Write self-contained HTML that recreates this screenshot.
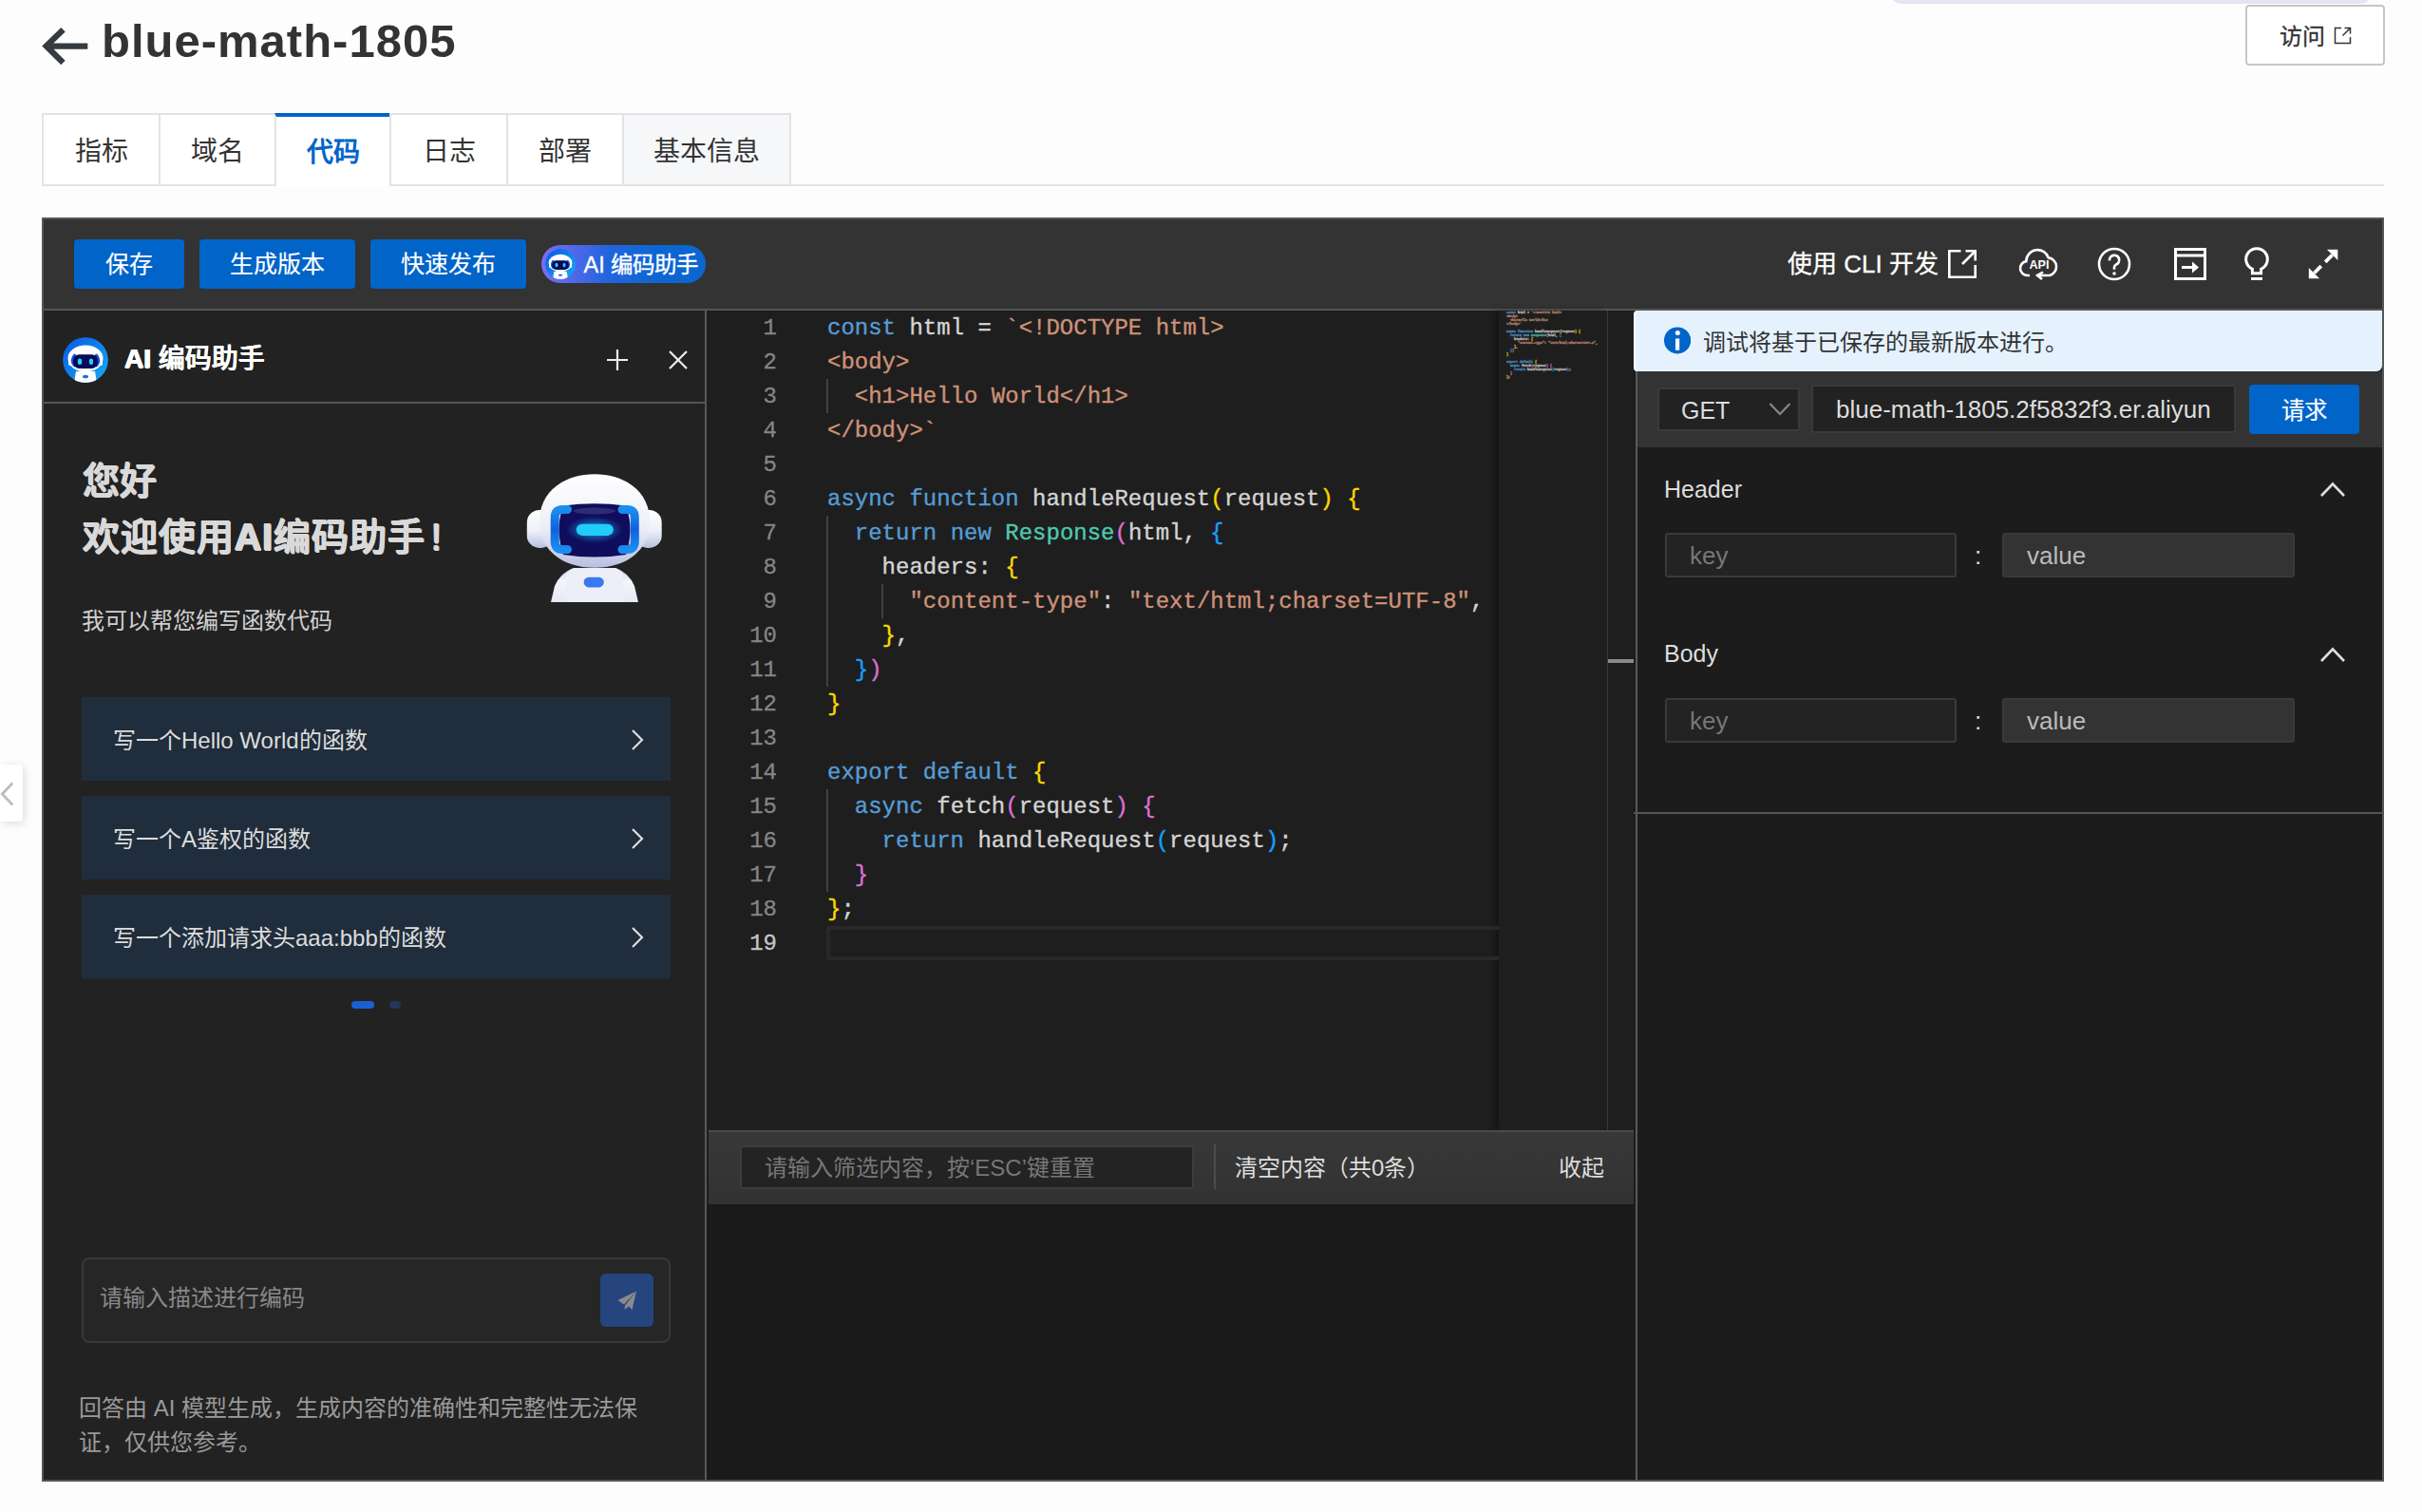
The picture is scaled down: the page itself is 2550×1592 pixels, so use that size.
<!DOCTYPE html>
<html lang="zh-CN"><head><meta charset="utf-8">
<style>
*{box-sizing:border-box;margin:0;padding:0}
html,body{width:2550px;height:1592px;overflow:hidden}
body{position:relative;background:#fdfdfd;font-family:"Liberation Sans",sans-serif;color:#333}
.a{position:absolute}
.t{white-space:nowrap}
/* header */
#lav{left:1990px;top:-10px;width:507px;height:14px;background:#e4e4f4;border-radius:0 0 12px 12px}
#title{left:107px;top:14.5px;font-size:49px;font-weight:bold;color:#333;line-height:56px;letter-spacing:1px}
#visit{left:2364px;top:5px;width:147px;height:64px;border:2px solid #c6c6c6;border-radius:4px;background:#fff}
#visit span{position:absolute;left:34px;top:16.5px;font-size:24px;line-height:30px;color:#333;-webkit-text-stroke:0.3px #333}
/* tabs */
.tab{top:119px;height:77px;border:2px solid #e3e3e3;border-right:none;background:#fff;font-size:28px;line-height:77px;text-align:center;color:#333}
.tab.act{border-top:4px solid #0064c8;color:#0064c8;font-weight:bold;border-bottom:none;line-height:75px}
#tabline{left:833px;top:194px;width:1677px;height:2px;background:#e3e3e3}
/* editor */
#ed{left:44px;top:229px;width:2466px;height:1331px;background:#1e1e1e;border:2px solid #555}
#tb{left:46px;top:231px;width:2462px;height:94px;background:#333}
#tbline{left:46px;top:325px;width:2462px;height:2px;background:#555}
.btn{top:252px;height:52px;background:#0064c8;border-radius:4px;color:#fff;font-size:25px;line-height:52px;text-align:center;-webkit-text-stroke:0.15px #fff}
#aipill{left:570px;top:258px;width:173px;height:40px;border-radius:20px;background:linear-gradient(90deg,#7e6cf3 0%,#5569ea 17%,#2265dd 40%,#0d66d3 70%,#0b66d0 100%)}
#aipill span{position:absolute;left:44.5px;top:3px;font-size:23.5px;line-height:36px;color:#fff;-webkit-text-stroke:0.35px #fff}
.tbi{color:#fff}
#cli{left:1882px;top:260px;font-size:26px;line-height:36px;color:#fff;-webkit-text-stroke:0.3px #fff}
/* left panel */
#lp{left:46px;top:327px;width:696px;height:1231px;background:#222}
#lpr{left:742px;top:327px;width:2px;height:1231px;background:#585858}
#lph{left:46px;top:423px;width:698px;height:2px;background:#555}
#lptitle{left:131px;top:359.5px;font-size:28px;font-weight:normal;line-height:36px;color:#fff;text-shadow:0.7px 0 0 #fff,-0.6px 0 0 #fff,0 0.5px 0 #fff,0 -0.4px 0 #fff}
#hello{left:87px;top:476.5px;font-size:39px;font-weight:normal;line-height:59px;color:#d9d9d9;text-shadow:1px 0 0 #d9d9d9,-1px 0 0 #d9d9d9,0 0.8px 0 #d9d9d9,0 -0.8px 0 #d9d9d9,0.7px 0.7px 0 #d9d9d9,-0.7px -0.7px 0 #d9d9d9}
#sub{left:86px;top:637.5px;font-size:24px;line-height:32px;color:#d0d0d0}
.card{left:86px;width:620px;height:88px;background:#202d3c}
.card span{position:absolute;left:33px;top:30.5px;font-size:24px;line-height:30px;color:#ddd}
.card svg{position:absolute;left:578px;top:34px}
#dot1{left:370px;top:1054px;width:24px;height:8px;border-radius:4px;background:#1c5fd0}
#dot2{left:410px;top:1054px;width:12px;height:8px;border-radius:4px;background:#26355a}
#inp{left:86px;top:1324px;width:620px;height:90px;border:2px solid #383838;border-radius:8px;background:#262626}
#inp span{position:absolute;left:17px;top:25.5px;font-size:24px;line-height:30px;color:#888}
#send{left:632px;top:1341px;width:56px;height:56px;border-radius:6px;background:#26457f}
#disc{left:83px;top:1465px;width:660px;font-size:24px;line-height:36px;color:#9a9a9a}
#coll{left:0;top:805px;width:24px;height:60px;background:#fff;border-radius:0 4px 4px 0;box-shadow:2px 2px 10px rgba(0,0,0,.13)}
/* code */
#code{left:744px;top:327px;width:976px;height:863px;background:#1e1e1e}
.ln{position:absolute;left:744px;margin-top:1px;width:74px;text-align:right;font-family:"Liberation Mono",monospace;font-size:24px;line-height:36px;color:#858585;-webkit-text-stroke:0.3px}
.cl{position:absolute;left:871px;margin-top:1px;font-family:"Liberation Mono",monospace;font-size:24px;line-height:36px;color:#d4d4d4;white-space:pre;-webkit-text-stroke:0.35px}
.k{color:#569cd6}.s{color:#ce9178}.c{color:#4ec9b0}.y{color:#ffd700}.p{color:#da70d6}.b{color:#179fff}
.mmc{-webkit-text-stroke:3px;font-weight:bold}
.ig{position:absolute;width:2px;background:#404040}
#curline{left:870px;top:975px;width:708px;height:36px;border:4px solid #282828;border-right:none}
#mm{left:1578px;top:327px;width:114px;height:863px;background:#1e1e1e;box-shadow:-4px 0 6px rgba(0,0,0,.35)}
#sbl{left:1692px;top:327px;width:1px;height:863px;background:#3a3a3a}
#sbmark{left:1693px;top:694px;width:27px;height:4px;background:#8a8a8a}
#con{left:746px;top:1190px;width:976px;height:78px;background:linear-gradient(#383838,#323232);border-top:2px solid #4a4a4a}
#conbot{left:744px;top:1268px;width:978px;height:290px;background:#1a1a1a}
#filt{left:779px;top:1206px;width:478px;height:46px;background:#232323;border:2px solid #3c3c3c;border-radius:2px}
#filt span{position:absolute;left:24px;top:6px;font-size:24px;line-height:32px;color:#777}
#condiv{left:1278px;top:1205px;width:2px;height:47px;background:#4c4c4c}
#clr{left:1300px;top:1214px;font-size:24px;line-height:32px;color:#ddd}
#shou{left:1641px;top:1214px;font-size:24px;line-height:32px;color:#ddd}
/* right panel */
#rp{left:1720px;top:327px;width:788px;height:1231px;background:#1c1c1c}
#rpl{left:1722px;top:391px;width:2px;height:1167px;background:#5a5a5a}
#notice{left:1720px;top:327px;width:788px;height:64px;background:#e5f2fe;border-radius:4px 0 6px 4px;border-left:2px solid #fff}
#notice span{position:absolute;left:71px;top:18px;font-size:24px;line-height:32px;color:#333}
#info{left:1753px;top:345px;width:27px;height:27px;border-radius:50%;background:#0064c8}
#reqrow{left:1724px;top:391px;width:784px;height:80px;background:#333}
#get{left:1745px;top:408px;width:150px;height:46px;background:#222;border:2px solid #3a3a3a;border-radius:2px}
#get span{position:absolute;left:23px;top:5.5px;font-size:25px;line-height:32px;color:#ddd}
#url{left:1907px;top:405px;width:447px;height:51px;background:#222;border:2px solid #3a3a3a;border-radius:2px}
#url span{position:absolute;left:24px;top:8px;font-size:26px;line-height:32px;color:#ddd}
#req{left:2368px;top:405px;width:116px;height:52px;background:#0064c8;border-radius:4px;color:#fff;font-size:24.5px;line-height:55px;text-align:center;-webkit-text-stroke:0.15px #fff}
.sech{font-size:25px;line-height:30px;color:#ddd}
.kin{width:307px;height:47px;background:#232323;border:2px solid #3a3a3a;border-radius:3px}
.kin span{position:absolute;left:24px;top:7px;font-size:26px;line-height:30px;color:#777}
.vin{width:308px;height:47px;background:#333;border:2px solid #3a3a3a;border-radius:3px}
.vin span{position:absolute;left:24px;top:7px;font-size:26px;line-height:30px;color:#bbb}
.colon{font-size:26px;line-height:30px;color:#ddd}
#rpbot{left:1720px;top:855px;width:788px;height:2px;background:#555}
</style></head><body>
<div id="lav" class="a"></div>
<svg class="a" style="left:42px;top:28px" width="52" height="42" viewBox="0 0 52 42"><path d="M24.5 3.2 L6.7 20.6 L24.5 38 M6.7 20.6 H50.3" fill="none" stroke="#363b41" stroke-width="6.3"/></svg>
<div id="title" class="a t">blue-math-1805</div>
<div id="visit" class="a"><span class="t">访问</span>
<svg class="a" style="left:91px;top:21px" width="20" height="20" viewBox="0 0 20 20"><path d="M8 1.5H1.5V17.5H17.5V11 M11.5 1.5H17.5V7.5 M17.5 1.5L9.5 9.5" fill="none" stroke="#333" stroke-width="1.5"/></svg></div>

<div class="a tab" style="left:44px;width:123px">指标</div>
<div class="a tab" style="left:167px;width:122px">域名</div>
<div class="a tab act" style="left:289px;width:121px">代码</div>
<div class="a tab" style="left:410px;width:123px">日志</div>
<div class="a tab" style="left:533px;width:122px">部署</div>
<div class="a tab" style="left:655px;width:178px;background:#f6f7f9;border-right:2px solid #e3e3e3">基本信息</div>
<div id="tabline" class="a"></div>

<div id="ed" class="a"></div>
<div id="tb" class="a"></div>
<div id="tbline" class="a"></div>
<div class="a btn t" style="left:78px;width:116px">保存</div>
<div class="a btn t" style="left:210px;width:164px">生成版本</div>
<div class="a btn t" style="left:390px;width:164px">快速发布</div>
<div id="aipill" class="a"><span class="t">AI 编码助手</span></div>
<div id="cli" class="a t">使用 CLI 开发</div>

<div id="lp" class="a"></div>
<div id="lpr" class="a"></div>
<div id="lph" class="a"></div>
<div id="lptitle" class="a t"><b>AI</b> 编码助手</div>
<div id="hello" class="a t">您好<br><span style="letter-spacing:1px">欢迎使用<b>AI</b>编码助手</span><span style="margin-left:6px">!</span></div>
<div id="sub" class="a t">我可以帮您编写函数代码</div>
<div class="a card" style="top:734px"><span class="t">写一个Hello World的函数</span><svg width="14" height="22" viewBox="0 0 14 22"><path d="M2 1L12 11L2 21" fill="none" stroke="#ddd" stroke-width="2.2"/></svg></div>
<div class="a card" style="top:838px"><span class="t">写一个A鉴权的函数</span><svg width="14" height="22" viewBox="0 0 14 22"><path d="M2 1L12 11L2 21" fill="none" stroke="#ddd" stroke-width="2.2"/></svg></div>
<div class="a card" style="top:942px"><span class="t">写一个添加请求头aaa:bbb的函数</span><svg width="14" height="22" viewBox="0 0 14 22"><path d="M2 1L12 11L2 21" fill="none" stroke="#ddd" stroke-width="2.2"/></svg></div>
<div id="dot1" class="a"></div><div id="dot2" class="a"></div>
<div id="inp" class="a"><span class="t">请输入描述进行编码</span></div>
<div id="send" class="a"></div>
<div id="disc" class="a">回答由 AI 模型生成，生成内容的准确性和完整性无法保<br>证，仅供您参考。</div>
<div id="coll" class="a"></div>

<div id="code" class="a"></div>
<div id="mm" class="a"></div>
<div class="a" style="left:1586px;top:327px;width:800px;height:700px;transform-origin:0 0;transform:scale(0.13889,0.11111);opacity:0.75"><div class="cl mmc" style="left:0;top:0px"><span class="k">const</span> html = <span class="s">`&lt;!DOCTYPE html&gt;</span></div><div class="cl mmc" style="left:0;top:36px"><span class="s">&lt;body&gt;</span></div><div class="cl mmc" style="left:0;top:72px"><span class="s">  &lt;h1&gt;Hello World&lt;/h1&gt;</span></div><div class="cl mmc" style="left:0;top:108px"><span class="s">&lt;/body&gt;`</span></div><div class="cl mmc" style="left:0;top:180px"><span class="k">async</span> <span class="k">function</span> handleRequest<span class="y">(</span>request<span class="y">)</span> <span class="y">{</span></div><div class="cl mmc" style="left:0;top:216px">  <span class="k">return</span> <span class="k">new</span> <span class="c">Response</span><span class="p">(</span>html, <span class="b">{</span></div><div class="cl mmc" style="left:0;top:252px">    headers: <span class="y">{</span></div><div class="cl mmc" style="left:0;top:288px">      <span class="s">"content-type"</span>: <span class="s">"text/html;charset=UTF-8"</span>,</div><div class="cl mmc" style="left:0;top:324px">    <span class="y">}</span>,</div><div class="cl mmc" style="left:0;top:360px">  <span class="b">}</span><span class="p">)</span></div><div class="cl mmc" style="left:0;top:396px"><span class="y">}</span></div><div class="cl mmc" style="left:0;top:468px"><span class="k">export</span> <span class="k">default</span> <span class="y">{</span></div><div class="cl mmc" style="left:0;top:504px">  <span class="k">async</span> fetch<span class="p">(</span>request<span class="p">)</span> <span class="p">{</span></div><div class="cl mmc" style="left:0;top:540px">    <span class="k">return</span> handleRequest<span class="b">(</span>request<span class="b">)</span>;</div><div class="cl mmc" style="left:0;top:576px">  <span class="p">}</span></div><div class="cl mmc" style="left:0;top:612px"><span class="y">}</span>;</div></div>
<div id="sbl" class="a"></div>
<div id="sbmark" class="a"></div>
<div id="con" class="a"></div>
<div id="conbot" class="a"></div>
<div id="filt" class="a"><span class="t">请输入筛选内容，按‘ESC’键重置</span></div>
<div id="condiv" class="a"></div>
<div id="clr" class="a t">清空内容（共0条）</div>
<div id="shou" class="a t">收起</div>

<div id="rp" class="a"></div>
<div id="rpl" class="a"></div>
<div id="notice" class="a"><span class="t">调试将基于已保存的最新版本进行。</span></div>
<div id="info" class="a"></div>
<div id="reqrow" class="a"></div>
<div id="get" class="a"><span class="t">GET</span></div>
<div id="url" class="a"><span class="t">blue-math-1805.2f5832f3.er.aliyun</span></div>
<div id="req" class="a t">请求</div>
<div class="a sech t" style="left:1752px;top:500px">Header</div>
<div class="a kin" style="left:1753px;top:561px"><span class="t">key</span></div>
<div class="a colon" style="left:2079px;top:570px">:</div>
<div class="a vin" style="left:2108px;top:561px"><span class="t">value</span></div>
<div class="a sech t" style="left:1752px;top:673px">Body</div>
<div class="a kin" style="left:1753px;top:735px"><span class="t">key</span></div>
<div class="a colon" style="left:2079px;top:744px">:</div>
<div class="a vin" style="left:2108px;top:735px"><span class="t">value</span></div>
<div id="rpbot" class="a"></div>
<div class="ln" style="top:327px">1</div>
<div class="ln" style="top:363px">2</div>
<div class="ln" style="top:399px">3</div>
<div class="ln" style="top:435px">4</div>
<div class="ln" style="top:471px">5</div>
<div class="ln" style="top:507px">6</div>
<div class="ln" style="top:543px">7</div>
<div class="ln" style="top:579px">8</div>
<div class="ln" style="top:615px">9</div>
<div class="ln" style="top:651px">10</div>
<div class="ln" style="top:687px">11</div>
<div class="ln" style="top:723px">12</div>
<div class="ln" style="top:759px">13</div>
<div class="ln" style="top:795px">14</div>
<div class="ln" style="top:831px">15</div>
<div class="ln" style="top:867px">16</div>
<div class="ln" style="top:903px">17</div>
<div class="ln" style="top:939px">18</div>
<div class="ln" style="top:975px;color:#c6c6c6">19</div>
<div id="curline" class="a"></div>
<div class="ig" style="left:870px;top:399px;height:36px"></div>
<div class="ig" style="left:870px;top:543px;height:180px"></div>
<div class="ig" style="left:928px;top:615px;height:36px"></div>
<div class="ig" style="left:870px;top:831px;height:108px"></div>
<div class="cl" style="top:327px"><span class="k">const</span> html = <span class="s">`&lt;!DOCTYPE html&gt;</span></div>
<div class="cl" style="top:363px"><span class="s">&lt;body&gt;</span></div>
<div class="cl" style="top:399px"><span class="s">  &lt;h1&gt;Hello World&lt;/h1&gt;</span></div>
<div class="cl" style="top:435px"><span class="s">&lt;/body&gt;`</span></div>
<div class="cl" style="top:507px"><span class="k">async</span> <span class="k">function</span> handleRequest<span class="y">(</span>request<span class="y">)</span> <span class="y">{</span></div>
<div class="cl" style="top:543px">  <span class="k">return</span> <span class="k">new</span> <span class="c">Response</span><span class="p">(</span>html, <span class="b">{</span></div>
<div class="cl" style="top:579px">    headers: <span class="y">{</span></div>
<div class="cl" style="top:615px">      <span class="s">"content-type"</span>: <span class="s">"text/html;charset=UTF-8"</span>,</div>
<div class="cl" style="top:651px">    <span class="y">}</span>,</div>
<div class="cl" style="top:687px">  <span class="b">}</span><span class="p">)</span></div>
<div class="cl" style="top:723px"><span class="y">}</span></div>
<div class="cl" style="top:795px"><span class="k">export</span> <span class="k">default</span> <span class="y">{</span></div>
<div class="cl" style="top:831px">  <span class="k">async</span> fetch<span class="p">(</span>request<span class="p">)</span> <span class="p">{</span></div>
<div class="cl" style="top:867px">    <span class="k">return</span> handleRequest<span class="b">(</span>request<span class="b">)</span>;</div>
<div class="cl" style="top:903px">  <span class="p">}</span></div>
<div class="cl" style="top:939px"><span class="y">}</span>;</div>


<!-- toolbar icons -->
<svg class="a" style="left:2049px;top:261px" width="34" height="34" viewBox="0 0 34 34"><path d="M15.5 3.3H3.3V30.7H30.7V18" fill="none" stroke="#fff" stroke-width="2.6"/><path d="M20.5 3.3H30.7V13.5" fill="none" stroke="#fff" stroke-width="2.6"/><path d="M30 4L17 17" fill="none" stroke="#fff" stroke-width="2.6"/></svg>
<svg class="a" style="left:2125px;top:257.5px" width="44" height="38" viewBox="0 0 44 38"><path d="M12 32H9.5A7.5 7.5 0 0 1 8.3 17.1A12 12 0 0 1 31.7 13.4A9.5 9.5 0 0 1 33 32H21" fill="none" stroke="#fff" stroke-width="2.6"/><path d="M26 28.5L20 32L25 36" fill="none" stroke="#fff" stroke-width="2.6"/><text x="22" y="25" text-anchor="middle" font-family="Liberation Sans" font-weight="bold" font-size="12.5" fill="#fff">API</text></svg>
<svg class="a" style="left:2207px;top:259px" width="38" height="38" viewBox="0 0 38 38"><circle cx="19" cy="19" r="16" fill="none" stroke="#fff" stroke-width="2.6"/><path d="M14 15.3A5.1 5.1 0 1 1 20.9 19.6C19.6 20.3 19 21 19 22.5V24.8" fill="none" stroke="#fff" stroke-width="2.7"/><circle cx="19" cy="29" r="1.8" fill="#fff"/></svg>
<svg class="a" style="left:2287px;top:259px" width="38" height="38" viewBox="0 0 38 38"><rect x="3.5" y="3.5" width="31" height="31" fill="none" stroke="#fff" stroke-width="3"/><path d="M3 10H35" stroke="#fff" stroke-width="3"/><path d="M10 22.5H22" stroke="#fff" stroke-width="3"/><path d="M21 16.5L28 22.5L21 28.5Z" fill="#fff"/></svg>
<svg class="a" style="left:2360px;top:258px" width="32" height="40" viewBox="0 0 32 40"><path d="M11.4 25.3V29.7H20.6V25.3A11.3 11.3 0 1 0 11.4 25.3Z" fill="none" stroke="#fff" stroke-width="3" stroke-linejoin="miter"/><path d="M10 35.5H22" stroke="#fff" stroke-width="3"/></svg>
<svg class="a" style="left:2428px;top:260px" width="36" height="36" viewBox="0 0 36 36"><path d="M33.3 2.8H22L33.3 14.1Z" fill="#fff"/><path d="M2.8 33.2H14.1L2.8 21.9Z" fill="#fff"/><path d="M27.5 8.5L20.2 15.8M15.8 20.2L8.5 27.5" stroke="#fff" stroke-width="3.8"/></svg>
<!-- pill avatar -->
<svg class="a" style="left:574px;top:262px" width="32" height="32" viewBox="0 0 48 48"><use href="#bot"/></svg>
<!-- panel header avatar -->
<svg class="a" style="left:66px;top:355px" width="48" height="48" viewBox="0 0 48 48"><use href="#bot"/></svg>
<svg class="a" style="left:638px;top:367px" width="24" height="24" viewBox="0 0 24 24"><path d="M12 1V23M1 12H23" stroke="#eee" stroke-width="2.2"/></svg>
<svg class="a" style="left:703px;top:368px" width="22" height="22" viewBox="0 0 22 22"><path d="M2 2L20 20M20 2L2 20" stroke="#eee" stroke-width="2.2"/></svg>
<!-- big robot -->
<svg class="a" style="left:550px;top:495px" width="152" height="142" viewBox="0 0 152 142"><use href="#bigbot"/></svg>
<!-- send plane -->
<svg class="a" style="left:632px;top:1341px" width="56" height="56" viewBox="0 0 56 56"><path d="M38 18.5L18.5 28L25 32.5Z" fill="#8a8a8a"/><path d="M38 18.5L26 33.5L25.5 38L30 34.5L33.5 38Z" fill="#8a8a8a"/></svg>
<!-- collapse chevron -->
<svg class="a" style="left:0px;top:822px" width="16" height="28" viewBox="0 0 16 28"><path d="M13.3 2.5L2.3 14L13.3 25.5" fill="none" stroke="#bdbdbd" stroke-width="2.8"/></svg>
<!-- info icon -->
<svg class="a" style="left:1752px;top:344px" width="28" height="29" viewBox="0 0 28 29"><circle cx="14" cy="14.4" r="14" fill="#0064c8"/><circle cx="14.3" cy="6.5" r="2.5" fill="#fff"/><rect x="12" y="12.5" width="4.2" height="12.2" fill="#fff"/></svg>
<!-- GET chevron -->
<svg class="a" style="left:1862px;top:423px" width="24" height="16" viewBox="0 0 24 16"><path d="M1.5 2L12 13L22.5 2" fill="none" stroke="#888" stroke-width="2.2"/></svg>
<!-- section chevrons -->
<svg class="a" style="left:2442px;top:506px" width="28" height="18" viewBox="0 0 28 18"><path d="M2 16L14 3.5L26 16" fill="none" stroke="#ddd" stroke-width="2.6"/></svg>
<svg class="a" style="left:2442px;top:680px" width="28" height="18" viewBox="0 0 28 18"><path d="M2 16L14 3.5L26 16" fill="none" stroke="#ddd" stroke-width="2.6"/></svg>
<svg width="0" height="0" style="position:absolute">
<defs>
<linearGradient id="bg1" x1="0" y1="0" x2="1" y2="1"><stop offset="0" stop-color="#0b55e6"/><stop offset="1" stop-color="#14b0f0"/></linearGradient>
<linearGradient id="hd" x1="0" y1="0" x2="0" y2="1"><stop offset="0" stop-color="#ffffff"/><stop offset="0.55" stop-color="#eef0f8"/><stop offset="1" stop-color="#b9c0e0"/></linearGradient>
<linearGradient id="bd" x1="0" y1="0" x2="0" y2="1"><stop offset="0" stop-color="#c9cfe8"/><stop offset="0.4" stop-color="#f4f5fb"/><stop offset="1" stop-color="#e6e8f4"/></linearGradient>
<linearGradient id="br" x1="0" y1="0" x2="0" y2="1"><stop offset="0" stop-color="#1a8ef0"/><stop offset="0.5" stop-color="#1360dc"/><stop offset="1" stop-color="#1a8ef0"/></linearGradient>
<radialGradient id="glow" cx="0.5" cy="0.5" r="0.5"><stop offset="0" stop-color="#1fb6ff" stop-opacity="0.8"/><stop offset="1" stop-color="#1fb6ff" stop-opacity="0"/></radialGradient>
<clipPath id="cc"><circle cx="24" cy="24" r="24"/></clipPath><g id="bot" clip-path="url(#cc)">
<circle cx="24" cy="24" r="24" fill="url(#bg1)"/>
<path d="M14 36L12 48H36L34 36Z" fill="#fff"/>
<rect x="21" y="40" width="6" height="3.2" rx="1.6" fill="#1a6fe0"/>
<ellipse cx="24" cy="22.5" rx="18.5" ry="14" fill="#fff"/>
<rect x="6" y="17" width="5" height="13" rx="2" fill="#fff"/>
<rect x="37" y="17" width="5" height="13" rx="2" fill="#fff"/>
<path d="M12.5 19.3Q8.3 24.6 12.5 29.8" fill="none" stroke="#1450d8" stroke-width="3.2" stroke-linecap="round"/>
<path d="M35.5 19.3Q39.7 24.6 35.5 29.8" fill="none" stroke="#1450d8" stroke-width="3.2" stroke-linecap="round"/>
<rect x="11" y="18.2" width="26" height="14.8" rx="6.5" fill="#0a0a5a"/>
<rect x="15.8" y="22.5" width="4.4" height="6.4" rx="2.2" fill="#22d3f5"/>
<rect x="28" y="22.5" width="4" height="6.4" rx="2" fill="#22d3f5"/>
</g>
<g id="bigbot">
<path d="M30 139L34 122Q40 108 54 103H98Q112 108 118 122L122 139Z" fill="url(#bd)"/>
<path d="M46 139V110Q50 103 56 103H96Q102 103 106 110V139Z" fill="#eceef8"/>
<rect x="64.6" y="112.8" width="21.2" height="10.6" rx="5.3" fill="#3a78f0"/>
<rect x="4.8" y="41.9" width="28" height="40" rx="13" fill="url(#hd)"/>
<rect x="118.7" y="41.9" width="28" height="40" rx="13" fill="url(#hd)"/>
<path d="M76 4.3C108 4.3 132 22 134 50C136 82 112 102.7 76 102.7C40 102.7 16 82 18 50C20 22 44 4.3 76 4.3Z" fill="url(#hd)"/>
<path d="M43 37.6Q76 33 109 37.6Q118 62 109 89Q76 94 43 89Q34 62 43 37.6Z" fill="#0f0d5c"/>
<ellipse cx="76" cy="43" rx="22" ry="3.5" fill="#3a3a80" opacity="0.7"/>
<ellipse cx="76" cy="62.8" rx="30" ry="14" fill="url(#glow)"/>
<rect x="56.7" y="56.7" width="39.2" height="12.2" rx="6.1" fill="#20cdf8"/>
<path d="M47.5 41.5H42Q34.2 41.5 34.2 50V75Q34.2 83.5 42 83.5H47.5" fill="none" stroke="url(#br)" stroke-width="9" stroke-linecap="round"/>
<path d="M105 41.5H110.5Q118.3 41.5 118.3 50V75Q118.3 83.5 110.5 83.5H105" fill="none" stroke="url(#br)" stroke-width="9" stroke-linecap="round"/>
</g>
</defs></svg>
</body></html>
